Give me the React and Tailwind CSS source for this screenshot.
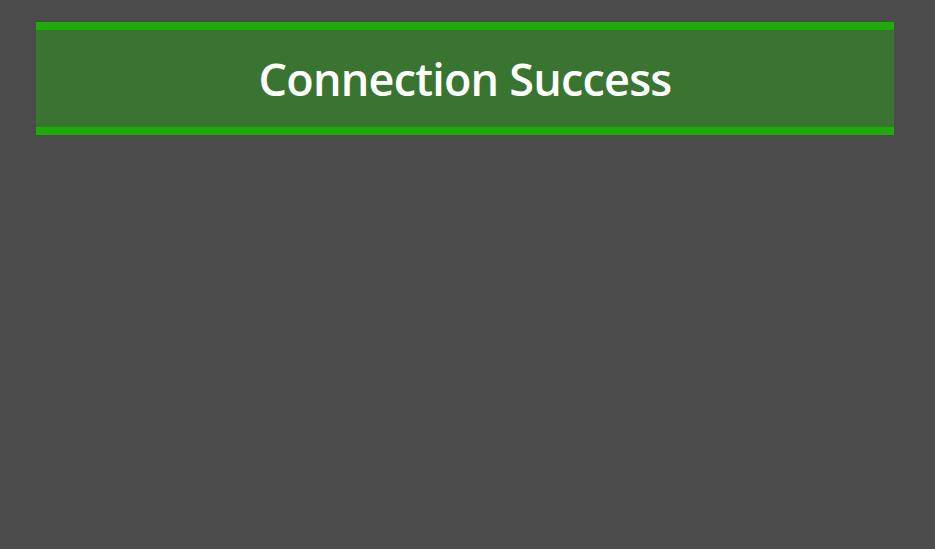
export default function App() {
  return (
    <div className="w-[935px] h-[549px] bg-[#4b4b4b] pt-[22px] pl-[36px]" style={{ fontFamily: '"Open Sans", sans-serif' }}>
      <div className="w-[858px] h-[113px] border-y-[8px] border-[#1fab0a] bg-[#397430] flex items-center justify-center">
        <h1 className="text-[45px] font-semibold text-white tracking-[-0.8px] leading-none">Connection Success</h1>
      </div>
    </div>
  );
}
